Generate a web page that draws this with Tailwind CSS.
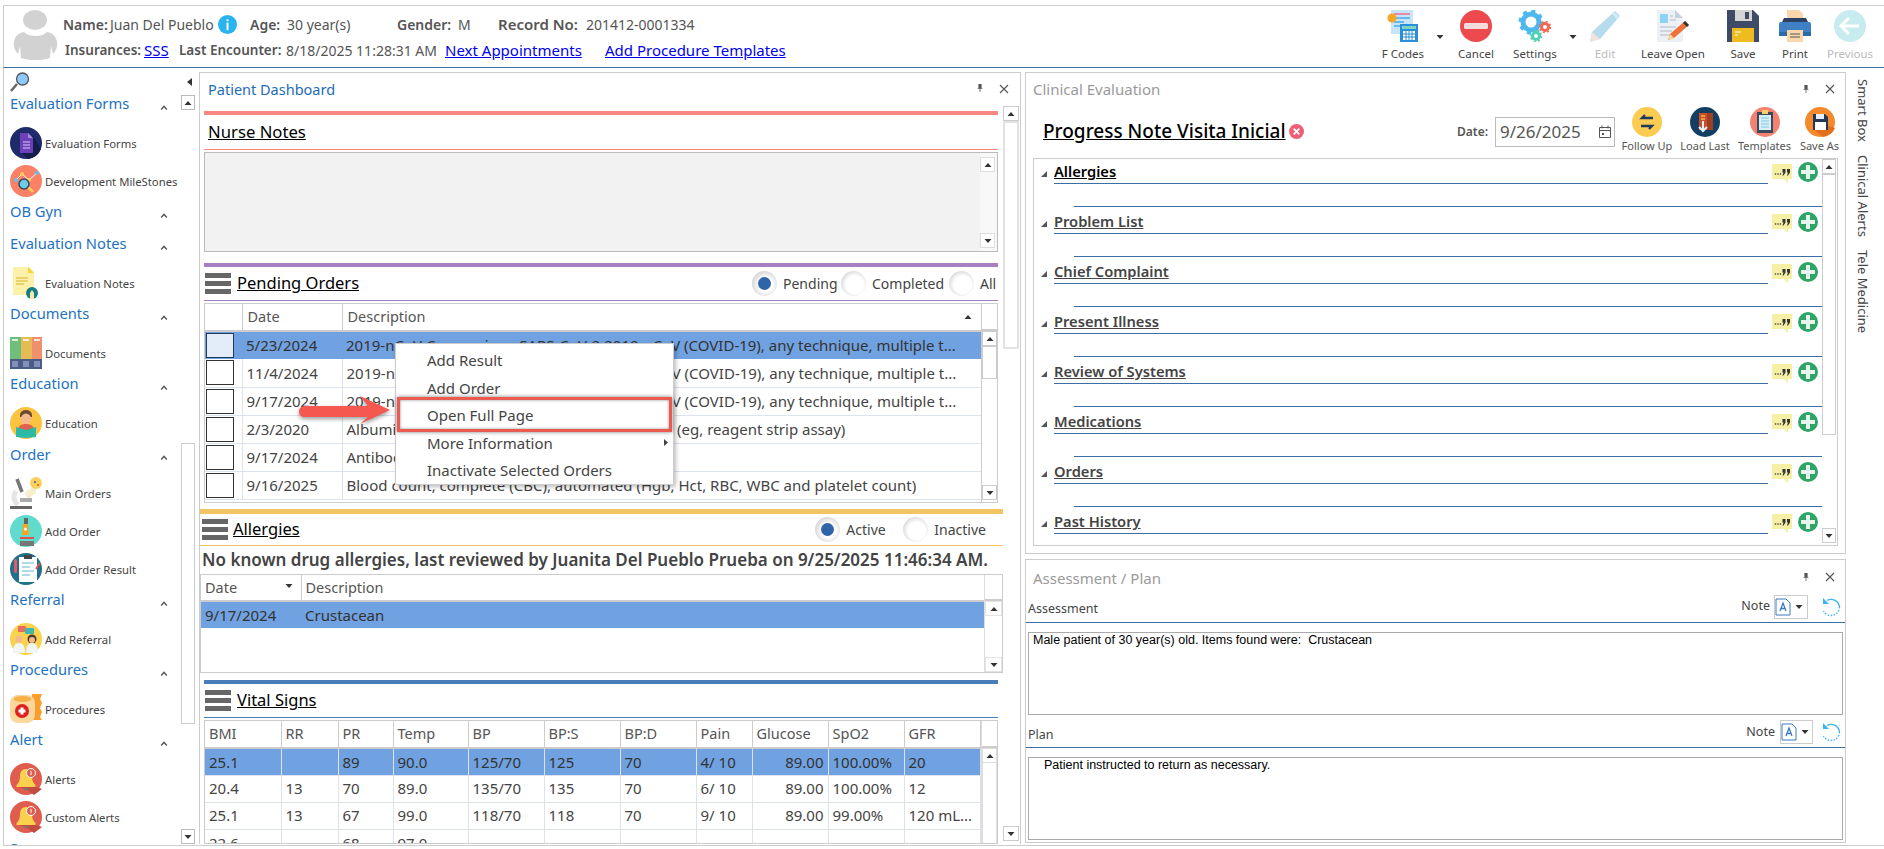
<!DOCTYPE html>
<html lang="en">
<head>
    <meta charset="UTF-8">
    <title>Patient Dashboard</title>
    <script src="https://cdn.jsdelivr.net/npm/@tailwindcss/browser@4"></script>
</head>
<body class="bg-white overflow-hidden font-['Noto_Sans',sans-serif] text-[#444]">
    <!-- Shared icons -->
    <svg class="hidden">
        <symbol id="chev" viewBox="0 0 10 8"><path d="M1.5 6.5 5 2.5l3.5 4" fill="none" stroke="#555" stroke-width="1.8"/></symbol>
        <symbol id="pin" viewBox="0 0 10 12"><path d="M3 1h4v5h1v1H5.5v4h-1V7H2V6h1z" fill="#555"/></symbol>
        <symbol id="close" viewBox="0 0 10 10"><path d="M1 1l8 8M9 1l-8 8" stroke="#555" stroke-width="1.1"/></symbol>
        <symbol id="quote" viewBox="0 0 20 21"><path d="M0 1h20v15h-4v4l-4-4H0z" fill="#f6f0a6"/><circle cx="3.5" cy="11" r=".8" fill="#333"/><circle cx="6" cy="11" r=".8" fill="#333"/><circle cx="8.5" cy="11" r=".8" fill="#333"/><path d="M10.5 6h3v3.5l-2 3h-1l1-3h-1zM15 6h3v3.5l-2 3h-1l1-3h-1z" fill="#333"/></symbol>
        <symbol id="plus" viewBox="0 0 20 20"><circle cx="10" cy="10" r="10" fill="#2fa565"/><path d="M8 3h4v5h5v4h-5v5H8v-5H3V8h5z" fill="#e8f5ee"/></symbol>
        <symbol id="tri" viewBox="0 0 6 6"><path d="M6 0v6H0z" fill="#555"/></symbol>
        <symbol id="bell" viewBox="0 0 32 32"><circle cx="16" cy="16" r="16" fill="#e05c4e"/><path d="M16 26 8 24l16-1 8 3-8 6z" fill="#c24c40"/><path d="M16 6c-4 0-6 3-6 7 0 5-1.500 7-3.500 9v2h19v-2c-2-2-3.500-4-3.500-9 0-4-2-7-6-7z" fill="#fcd04f"/><path d="M13 25h6l-3 3z" fill="#777"/><circle cx="21" cy="10" r="4.500" fill="#e05c4e" stroke="#fff" stroke-width="1"/><path d="M21 7.800v4.400" stroke="#fff" stroke-width="1"/></symbol>
        <symbol id="note" viewBox="0 0 16 18"><path d="M1 1h10l4 4v12H1z" fill="#fff" stroke="#3a78c4"/><path d="M5 13 8 5l3 8M6 10.500h4" fill="none" stroke="#3a78c4" stroke-width="1.300"/></symbol>
        <symbol id="reset" viewBox="0 0 20 20"><path d="M6 3.500A8.500 8.500 0 0 1 18.500 10" fill="none" stroke="#3db4f0" stroke-width="1.400"/><path d="M18.500 10A8.500 8.500 0 0 1 2.500 14" fill="none" stroke="#3db4f0" stroke-width="1.400" stroke-dasharray="1.500 1.500"/><path d="M2 1v6h6z" fill="#3db4f0"/></symbol>
        <symbol id="up" viewBox="0 0 8 6"><path d="M4 1 7.500 5H.5z" fill="#333"/></symbol>
        <symbol id="down" viewBox="0 0 8 6"><path d="M4 5 .5 1h7z" fill="#333"/></symbol>
    </svg>

    <div class="relative w-[1884px] h-[849px] pt-[5px] flex flex-col overflow-hidden">
        <!-- Patient header and toolbar -->
        <header class="ml-[3px] h-[63px] shrink-0 flex border-t border-t-[#ccc] border-l border-l-[#ccc] border-b border-b-[#3a6ea5]">
            <svg class="ml-[9px] mt-[4px] w-[45px] h-[50px] shrink-0" viewBox="0 0 45 50"><ellipse cx="22" cy="10" rx="12" ry="10" fill="#d2d2d2"/><path d="M11 22c-6 1-9 4-10 10-1 4 1 9 4 12l2-8 1 12c9 3 20 3 29 0l1-12 2 8c3-3 5-8 4-12-1-6-4-9-10-10-3 3-7 4-11 4s-9-1-12-4z" fill="#d2d2d2"/></svg>
            <div class="ml-[5px] pt-[5px] text-[14px] text-[#555]">
                <div class="flex items-center h-[26px]">
                    <span class="w-[47px] font-semibold">Name:</span>
                    <span class="w-[108px]">Juan Del Pueblo</span>
                    <span class="w-[32px]"><svg class="w-[19px] h-[19px]" viewBox="0 0 20 20"><circle cx="10" cy="10" r="10" fill="#29b4f0"/><rect x="9" y="8" width="2" height="8" fill="#fff"/><rect x="9" y="4.500" width="2" height="2" fill="#fff"/></svg></span>
                    <span class="w-[37px] font-semibold">Age:</span>
                    <span class="w-[110px]">30 year(s)</span>
                    <span class="w-[61px] font-semibold">Gender:</span>
                    <span class="w-[40px]">M</span>
                    <span class="w-[88px] font-semibold text-[15px]">Record No:</span>
                    <span>201412-0001334</span>
                </div>
                <div class="flex items-center h-[26px] ml-[2px]">
                    <span class="w-[79px] font-semibold text-[13.5px]">Insurances:</span>
                    <a class="w-[35px] text-[15px] text-[#0000ee] underline">SSS</a>
                    <span class="w-[107px] font-semibold text-[13.5px]">Last Encounter:</span>
                    <span class="w-[159px]">8/18/2025 11:28:31 AM</span>
                    <a class="w-[160px] text-[15px] text-[#0000ee] underline">Next Appointments</a>
                    <a class="text-[15px] text-[#0000ee] underline">Add Procedure Templates</a>
                </div>
            </div>
            <div class="ml-auto pr-[3px] pt-[4px] flex text-[11.5px] text-[#444] text-center leading-[24px]">
                <div class="w-[66px]">
                    <svg class="mx-auto w-[32px] h-[32px]" viewBox="0 0 32 32"><rect x="4" y="0" width="22" height="24" fill="#c7e4f8"/><rect x="7" y="3" width="16" height="2" fill="#e889a8"/><rect x="7" y="7" width="16" height="2" fill="#6bb8ec"/><rect x="7" y="11" width="10" height="2" fill="#6bb8ec"/><rect x="7" y="15" width="10" height="2" fill="#6bb8ec"/><rect x="13" y="14" width="18" height="18" fill="#2a8ed8"/><rect x="15" y="16" width="14" height="3" fill="#7fd4c4"/><path d="M16 21h12v9H16z" fill="#fff"/><path d="M16 24h12M16 27h12M19 21v9M22 21v9M25 21v9" stroke="#2a8ed8"/><circle cx="5" cy="8" r="4.500" fill="#f5a623"/></svg>
                    <div>F Codes</div>
                </div>
                <div class="w-[10px] pt-[24px]"><svg class="w-[8px] h-[6px]" viewBox="0 0 8 6"><use href="#down"/></svg></div>
                <div class="w-[60px]">
                    <svg class="mx-auto w-[32px] h-[32px]" viewBox="0 0 32 32"><circle cx="16" cy="16" r="16" fill="#ec4a4f"/><rect x="4" y="13" width="24" height="6" rx="1.500" fill="#f3dcdc"/></svg>
                    <div>Cancel</div>
                </div>
                <div class="w-[58px]">
                    <svg class="mx-auto w-[34px] h-[32px]" viewBox="0 0 34 32"><circle cx="13" cy="12" r="8" fill="none" stroke="#4db8ee" stroke-width="5"/><circle cx="13" cy="12" r="11" fill="none" stroke="#4db8ee" stroke-width="3" stroke-dasharray="4 4.640"/><circle cx="27" cy="17" r="3.500" fill="none" stroke="#ef6a55" stroke-width="3"/><circle cx="27" cy="17" r="5.500" fill="none" stroke="#ef6a55" stroke-width="1.500" stroke-dasharray="2 2.320"/><circle cx="18" cy="26" r="3.500" fill="none" stroke="#4fd1b5" stroke-width="3"/><circle cx="18" cy="26" r="5.500" fill="none" stroke="#4fd1b5" stroke-width="1.500" stroke-dasharray="2 2.320"/></svg>
                    <div>Settings</div>
                </div>
                <div class="w-[10px] ml-[5px] pt-[24px]"><svg class="w-[8px] h-[6px]" viewBox="0 0 8 6"><use href="#down"/></svg></div>
                <div class="w-[52px] text-[#bbb]">
                    <svg class="mx-auto w-[32px] h-[32px]" viewBox="0 0 32 32"><path d="M26 1l5 5L11 29 1 32l2-10z" fill="#b5dcec"/><path d="M3 22l8 7-10 3z" fill="#f3e2dc"/><path d="M25 2l5 5-2 2-5-5z" fill="#d3ebf4"/></svg>
                    <div>Edit</div>
                </div>
                <div class="w-[84px]">
                    <svg class="mx-auto w-[34px] h-[32px]" viewBox="0 0 34 32"><path d="M1 0h18l8 8v24H1z" fill="#edf1f6"/><path d="M19 0l8 8h-8z" fill="#c8d0dc"/><rect x="4" y="4" width="8" height="9" fill="#8dd3f7"/><path d="M4 17h16M4 21h12M4 25h10M14 6h3M14 10h6" stroke="#c5ccd8" stroke-width="1.500"/><path d="M29 11l4 4-15 13-6 2 2-6z" fill="#f0713a"/><path d="M29 11l4 4-2 2-4-4z" fill="#333"/><path d="M14 24l4 4-6 2z" fill="#f5d79a"/></svg>
                    <div>Leave Open</div>
                </div>
                <div class="w-[56px]">
                    <svg class="mx-auto w-[32px] h-[32px]" viewBox="0 0 32 32"><path d="M0 0h26l6 6v26H0z" fill="#3f4a66"/><rect x="8" y="0" width="17" height="11" fill="#d5d5d5"/><rect x="18" y="2" width="4" height="7" fill="#3f4a66"/><rect x="5" y="18" width="22" height="14" fill="#eebc1f"/><path d="M8 22h6M8 25h3" stroke="#fff" stroke-width="1.200"/></svg>
                    <div>Save</div>
                </div>
                <div class="w-[48px]">
                    <svg class="mx-auto w-[32px] h-[32px]" viewBox="0 0 32 32"><path d="M8 0h12l4 4v10H8z" fill="#fad7a8"/><path d="M5 8h22l2 4H3z" fill="#2d4263"/><rect x="0" y="12" width="32" height="14" rx="2" fill="#3f7fc4"/><rect x="0" y="22" width="32" height="4" fill="#2d6aa8"/><rect x="8" y="20" width="16" height="12" fill="#fad7a8"/><path d="M11 24h10M11 27h10" stroke="#555"/></svg>
                    <div>Print</div>
                </div>
                <div class="w-[62px] text-[#bbb]">
                    <svg class="mx-auto w-[32px] h-[32px]" viewBox="0 0 32 32"><circle cx="16" cy="16" r="16" fill="#c7ebee"/><path d="M15 8l-8 8 8 8M7 16h18" fill="none" stroke="#fff" stroke-width="3"/></svg>
                    <div>Previous</div>
                </div>
            </div>
        </header>

        <main class="ml-[3px] h-[778px] flex border-b border-b-[#ccc]">
            <!-- Left navigation -->
            <aside class="relative w-[196px] h-[777px] shrink-0 flex border-l border-l-[#ccc] overflow-hidden">
                <div class="w-[177px] pt-[4px] text-[12px] text-[#444]">
                    <svg class="ml-[6px] w-[20px] h-[20px]" viewBox="0 0 20 20"><path d="M7 12 1 19" stroke="#666" stroke-width="2.500"/><circle cx="12.500" cy="7" r="6" fill="#8fc8fa" stroke="#555" stroke-width="1.300"/></svg>

                    <div class="-mt-px flex items-center h-[26px] pl-[6px]"><span class="w-[150px] text-[14.7px] text-[#2272c3] -translate-y-px">Evaluation Forms</span><svg class="w-[8px] h-[7px] mt-[6px]"><use href="#chev"/></svg></div>
                    <div class="mt-[7px] mb-[-1px]">
                        <div class="flex items-center h-[38px] pl-[6px]">
                            <svg class="w-[32px] h-[32px] mr-[3px]" viewBox="0 0 32 32"><circle cx="16" cy="16" r="16" fill="#1f2a6b"/><path d="M23 9 31 22A16 16 0 0 1 18 32L10 24z" fill="#141c4c"/><path d="M10 6h8l5 5v15H10z" fill="#6d3fb8"/><path d="M18 6l5 5h-5z" fill="#a58ad8"/><path d="M13 15h7M13 18h7M13 21h7" stroke="#d9ccf2" stroke-width="1"/></svg>
                            <span class="text-[11.3px] translate-y-px">Evaluation Forms</span>
                        </div>
                        <div class="flex items-center h-[38px] pl-[6px]">
                            <svg class="w-[32px] h-[32px] mr-[3px]" viewBox="0 0 32 32"><circle cx="16" cy="16" r="16" fill="#fa8168"/><path d="M6 15 12 9l7 6 8-7" fill="none" stroke="#fff" stroke-width="1"/><circle cx="6" cy="15" r="2" fill="#5ec4e8"/><circle cx="12" cy="9" r="2" fill="#fcd04f"/><circle cx="19" cy="15" r="2" fill="#fcd04f"/><circle cx="27" cy="8" r="2" fill="#5ec4e8"/><path d="M18 22l5 5" stroke="#fcd04f" stroke-width="2.500"/><circle cx="14" cy="19" r="5" fill="#6ccbe8" stroke="#34495e" stroke-width="1.500"/></svg>
                            <span class="text-[11.3px] translate-y-px">Development MileStones</span>
                        </div>
                    </div>

                    <div class="flex items-center h-[26px] pl-[6px] mb-[6px]"><span class="w-[150px] text-[14.7px] text-[#2272c3] -translate-y-px">OB Gyn</span><svg class="w-[8px] h-[7px] mt-[6px]"><use href="#chev"/></svg></div>

                    <div class="flex items-center h-[26px] pl-[6px]"><span class="w-[150px] text-[14.7px] text-[#2272c3] -translate-y-px">Evaluation Notes</span><svg class="w-[8px] h-[7px] mt-[6px]"><use href="#chev"/></svg></div>
                    <div class="mt-[7px] mb-[-1px]">
                        <div class="flex items-center h-[38px] pl-[6px]">
                            <svg class="w-[32px] h-[32px] mr-[3px]" viewBox="0 0 32 32"><path d="M3 0h16l5 5v23H3z" fill="#fdf0a8"/><path d="M18 0l6 6h-6z" fill="#f5d33a"/><path d="M6 11h12M6 14h12M6 17h8" stroke="#d9b43a" stroke-width="1.200"/><circle cx="22" cy="26" r="6" fill="#177e84"/><path d="M20 32v-6l2-3 2 3v6z" fill="#f8e9b0"/></svg>
                            <span class="text-[11.3px] translate-y-px">Evaluation Notes</span>
                        </div>
                    </div>

                    <div class="flex items-center h-[26px] pl-[6px]"><span class="w-[150px] text-[14.7px] text-[#2272c3] -translate-y-px">Documents</span><svg class="w-[8px] h-[7px] mt-[6px]"><use href="#chev"/></svg></div>
                    <div class="mt-[7px] mb-[-1px]">
                        <div class="flex items-center h-[38px] pl-[6px]">
                            <svg class="w-[32px] h-[32px] mr-[3px]" viewBox="0 0 32 32"><rect width="11" height="32" fill="#6fbf7a"/><rect x="11" width="11" height="32" fill="#e4bb55"/><rect x="22" width="10" height="32" fill="#ee8f6e"/><rect y="22" width="32" height="10" fill="#4a5b85"/><path d="M2 3h6M13 3h6M24 3h6" stroke="#fff" stroke-width="1.500"/><rect x="2" y="24" width="6" height="6" fill="#8090b8"/><rect x="13" y="24" width="6" height="6" fill="#8090b8"/><rect x="24" y="24" width="6" height="6" fill="#8090b8"/></svg>
                            <span class="text-[11.3px] translate-y-px">Documents</span>
                        </div>
                    </div>

                    <div class="flex items-center h-[26px] pl-[6px]"><span class="w-[150px] text-[14.7px] text-[#2272c3] -translate-y-px">Education</span><svg class="w-[8px] h-[7px] mt-[6px]"><use href="#chev"/></svg></div>
                    <div class="mt-[7px] mb-[-1px]">
                        <div class="flex items-center h-[38px] pl-[6px]">
                            <svg class="w-[32px] h-[32px] mr-[3px]" viewBox="0 0 32 32"><circle cx="16" cy="16" r="16" fill="#fbc340"/><path d="M10 8a6 5 0 0 1 12 0v2H10z" fill="#6b4a32"/><ellipse cx="16" cy="12" rx="5" ry="5.500" fill="#f5b98e"/><path d="M8 24c0-5 3-7 8-7s8 2 8 7z" fill="#e2604e"/><path d="M6 20l10 3 10-3v10l-10 1-10-1z" fill="#2cb9a5"/></svg>
                            <span class="text-[11.3px] translate-y-px">Education</span>
                        </div>
                    </div>

                    <div class="flex items-center h-[26px] pl-[6px]"><span class="w-[150px] text-[14.7px] text-[#2272c3]">Order</span><svg class="w-[8px] h-[7px] mt-[6px]"><use href="#chev"/></svg></div>
                    <div class="mt-[7px] mb-[-1px]">
                        <div class="flex items-center h-[38px] pl-[6px]">
                            <svg class="w-[32px] h-[32px] mr-[3px]" viewBox="0 0 32 32"><path d="M7 2l5 13" stroke="#777" stroke-width="3.500"/><path d="M6 14a10 10 0 0 0 2 14" fill="none" stroke="#e6e6e6" stroke-width="5"/><path d="M14 16 26 8v8l-8 6z" fill="#f4efd0"/><rect x="10" y="21" width="12" height="4" fill="#aaa"/><rect y="29" width="22" height="3" fill="#666"/><circle cx="26" cy="6" r="6" fill="#fbd05c"/><circle cx="25" cy="5" r="1" fill="#2c5d9e"/><circle cx="28" cy="8" r="1" fill="#d9503f"/></svg>
                            <span class="text-[11.3px] translate-y-px">Main Orders</span>
                        </div>
                        <div class="flex items-center h-[38px] pl-[6px]">
                            <svg class="w-[32px] h-[32px] mr-[3px]" viewBox="0 0 32 32"><circle cx="16" cy="16" r="16" fill="#5fdccd"/><rect x="14" y="3" width="4" height="6" fill="#666"/><path d="M13 9h5l1 11h-7z" fill="#f4a623"/><circle cx="15.500" cy="14" r="1.500" fill="#fff"/><rect x="10" y="22" width="14" height="2" fill="#e2504e"/><rect x="10" y="26" width="14" height="5" fill="#777"/></svg>
                            <span class="text-[11.3px] translate-y-px">Add Order</span>
                        </div>
                        <div class="flex items-center h-[38px] pl-[6px]">
                            <svg class="w-[32px] h-[32px] mr-[3px]" viewBox="0 0 32 32"><circle cx="16" cy="16" r="16" fill="#1f7088"/><rect x="9" y="4" width="18" height="25" fill="#fff"/><rect x="14" y="2" width="8" height="4" fill="#444"/><path d="M12 10h12M12 14h8M12 18h12M12 22h8" stroke="#5fb8c8"/><rect x="4" y="6" width="3" height="14" rx="1.500" fill="#e25b6a"/><path d="M26 16l4-6" stroke="#e2504e" stroke-width="2"/></svg>
                            <span class="text-[11.3px] translate-y-px">Add Order Result</span>
                        </div>
                    </div>

                    <div class="flex items-center h-[26px] pl-[6px]"><span class="w-[150px] text-[14.7px] text-[#2272c3] -translate-y-px">Referral</span><svg class="w-[8px] h-[7px] mt-[6px]"><use href="#chev"/></svg></div>
                    <div class="mt-[7px] mb-[-1px]">
                        <div class="flex items-center h-[38px] pl-[6px]">
                            <svg class="w-[32px] h-[32px] mr-[3px]" viewBox="0 0 32 32"><circle cx="16" cy="16" r="16" fill="#fbd24d"/><rect x="8" y="3" width="8" height="6" rx="1" fill="#ec6a5e"/><rect x="15" y="5" width="9" height="6" rx="1" fill="#3fb8b0"/><circle cx="9" cy="16" r="3.500" fill="#f5b98e"/><path d="M3 30c0-7 2-10 6-10s6 3 6 10z" fill="#eef6f6"/><circle cx="22" cy="16" r="4.500" fill="#4a3a30"/><circle cx="22" cy="17" r="3" fill="#f5b98e"/><path d="M16 30c0-7 2-10 6-10s6 3 6 10z" fill="#eef6f6"/></svg>
                            <span class="text-[11.3px] translate-y-px">Add Referral</span>
                        </div>
                    </div>

                    <div class="flex items-center h-[26px] pl-[6px]"><span class="w-[150px] text-[14.7px] text-[#2272c3] -translate-y-px">Procedures</span><svg class="w-[8px] h-[7px] mt-[6px]"><use href="#chev"/></svg></div>
                    <div class="mt-[7px] mb-[-1px]">
                        <div class="flex items-center h-[38px] pl-[6px]">
                            <svg class="w-[32px] h-[32px] mr-[3px]" viewBox="0 0 32 32"><path d="M22 1h10l-2 5 2 4-2 5 2 4-2 5 2 3H22z" fill="#fb9d2c"/><rect x="0" y="2" width="25" height="28" rx="8" fill="#fbd79c"/><ellipse cx="12.500" cy="6" rx="9" ry="3" fill="#f5b04a"/><circle cx="12" cy="18" r="7" fill="#e01f1f"/><path d="M10.500 14.500h3v2h2v3h-2v2h-3v-2h-2v-3h2z" fill="#fff"/></svg>
                            <span class="text-[11.3px] translate-y-px">Procedures</span>
                        </div>
                    </div>

                    <div class="flex items-center h-[26px] pl-[6px]"><span class="w-[150px] text-[14.7px] text-[#2272c3] -translate-y-px">Alert</span><svg class="w-[8px] h-[7px] mt-[6px]"><use href="#chev"/></svg></div>
                    <div class="mt-[7px] mb-[-1px]">
                        <div class="flex items-center h-[38px] pl-[6px]">
                            <svg class="w-[32px] h-[32px] mr-[3px]"><use href="#bell"/></svg>
                            <span class="text-[11.3px] translate-y-px">Alerts</span>
                        </div>
                        <div class="flex items-center h-[38px] pl-[6px]">
                            <svg class="w-[32px] h-[32px] mr-[3px]"><use href="#bell"/></svg>
                            <span class="text-[11.3px] translate-y-px">Custom Alerts</span>
                        </div>
                    </div>
                    <div class="flex items-center h-[26px] pl-[6px]"><span class="w-[150px] text-[14.7px] text-[#2272c3]">Surgery</span></div>
                </div>
                <!-- Navigation scrollbar -->
                <div class="w-[14px] pt-[27px] flex flex-col items-stretch">
                    <div class="h-[15px] border border-[#bbb] flex items-center justify-center"><svg class="w-[8px] h-[6px]"><use href="#up"/></svg></div>
                    <div class="mt-[333px] h-[281px] border border-[#ccc]"></div>
                    <div class="mt-[105px] h-[15px] border border-[#bbb] flex items-center justify-center"><svg class="w-[8px] h-[6px]"><use href="#down"/></svg></div>
                </div>
                <svg class="absolute left-[183px] top-[10px] w-[5px] h-[8px]" viewBox="0 0 5 8"><path d="M5 0v8L0 4z" fill="#333"/></svg>
            </aside>

            <!-- Patient dashboard -->
            <section class="mt-[4px] w-[822px] h-[772px] shrink-0 flex border border-[#ccc] border-b-0 overflow-hidden">
                <div class="w-[803px] shrink-0">
                    <div class="h-[38px] pl-[8px] pb-[4px] flex items-center">
                        <span class="text-[14.5px] text-[#1c6cb8]">Patient Dashboard</span>
                    </div>
                    <div class="ml-[4px] w-[794px]">
                        <div class="h-[4px] bg-[#f98683]"></div>
                        <div class="h-[35px] pl-[4px] flex items-center border-b border-b-[#f98683]"><span class="text-[16.7px] text-black underline">Nurse Notes</span></div>
                        <div class="mt-[2px] h-[100px] flex border border-[#bbb] bg-[#f2f2f2]">
                            <div class="flex-1"></div>
                            <div class="w-[17px] bg-[#f8f8f8] pr-[2px] pt-[4px] pb-[3px] flex flex-col justify-between items-center">
                                <div class="w-[15px] h-[15px] bg-white border border-[#ddd] flex items-center justify-center"><svg class="w-[8px] h-[6px]"><use href="#up"/></svg></div>
                                <div class="w-[15px] h-[15px] bg-white border border-[#ddd] flex items-center justify-center"><svg class="w-[8px] h-[6px]"><use href="#down"/></svg></div>
                            </div>
                        </div>
                        <div class="mt-[11px] h-[4px] bg-[#a680c0]"></div>
                        <div class="h-[34px] flex items-center border-b border-b-[#a680c0]">
                            <div class="ml-px w-[26px] flex flex-col gap-[3px]"><i class="h-[5px] bg-[#666]"></i><i class="h-[5px] bg-[#666]"></i><i class="h-[5px] bg-[#666]"></i></div>
                            <span class="ml-[6px] text-[16.5px] text-black underline">Pending Orders</span>
                            <div class="ml-auto flex items-center text-[14px] text-[#444]">
                                <span class="w-[25px] h-[25px] rounded-full bg-[radial-gradient(circle_at_55%_55%,#fff_35%,#b8b8b8_100%)] flex items-center justify-center"><i class="w-[13px] h-[13px] rounded-full bg-[#2f65a8]"></i></span>
                                <span class="w-[64px] pl-[6px]">Pending</span>
                                <span class="w-[25px] h-[25px] rounded-full bg-[radial-gradient(circle_at_55%_55%,#fff_45%,#b8b8b8_100%)]"></span>
                                <span class="w-[83px] pl-[6px]">Completed</span>
                                <span class="w-[25px] h-[25px] rounded-full bg-[radial-gradient(circle_at_55%_55%,#fff_45%,#b8b8b8_100%)]"></span>
                                <span class="w-[24px] pl-[6px]">All</span>
                            </div>
                        </div>
                        <div class="mt-[2px] h-[200px] flex border border-[#ccc] overflow-hidden text-[15px]">
                            <table class="w-[776px] h-fit table-fixed shrink-0 border-collapse">
                                <colgroup><col class="w-[37px]"><col class="w-[100px]"><col></colgroup>
                                <thead>
                                    <tr class="h-[27px] border-b-2 border-b-[#ccc] text-[#555] text-[14.5px]">
                                        <th class="border-r border-r-[#ccc]"></th>
                                        <th class="pl-[5px] font-normal text-left border-r border-r-[#ccc]">Date</th>
                                        <th class="pl-[5px] font-normal text-left"><div class="flex items-center justify-between pr-[9px]">Description<svg class="w-[8px] h-[6px]"><use href="#up"/></svg></div></th>
                                    </tr>
                                </thead>
                                <tbody>
                                    <tr class="h-[28px] bg-[#70a1e0] text-[#333]">
                                        <td class="pl-px"><div class="w-[28px] h-[25px] border border-[#1d3a60] bg-[#e3ecf8]"></div></td>
                                        <td class="pl-[4px]">5/23/2024</td>
                                        <td class="pl-[4px] truncate">2019-nCoV Coronavirus, SARS-CoV-2 2019-nCoV (COVID-19), any technique, multiple t...</td>
                                    </tr>
                                    <tr class="h-[28px] border-b border-b-[#dde3ec]">
                                        <td class="pl-px"><div class="w-[28px] h-[25px] border border-[#333]"></div></td>
                                        <td class="pl-[4px] border-l border-l-[#dde3ec]">11/4/2024</td>
                                        <td class="pl-[4px] truncate border-l border-l-[#dde3ec]">2019-nCoV Coronavirus, SARS-CoV-2 2019-nCoV (COVID-19), any technique, multiple t...</td>
                                    </tr>
                                    <tr class="h-[28px] border-b border-b-[#dde3ec]">
                                        <td class="pl-px"><div class="w-[28px] h-[25px] border border-[#333]"></div></td>
                                        <td class="pl-[4px] border-l border-l-[#dde3ec]">9/17/2024</td>
                                        <td class="pl-[4px] truncate border-l border-l-[#dde3ec]">2019-nCoV Coronavirus, SARS-CoV-2 2019-nCoV (COVID-19), any technique, multiple t...</td>
                                    </tr>
                                    <tr class="h-[28px] border-b border-b-[#dde3ec]">
                                        <td class="pl-px"><div class="w-[28px] h-[25px] border border-[#333]"></div></td>
                                        <td class="pl-[4px] border-l border-l-[#dde3ec]">2/3/2020</td>
                                        <td class="pl-[4px] truncate border-l border-l-[#dde3ec]">Albumin; urine (eg, albumin), semiquantitative (eg, reagent strip assay)</td>
                                    </tr>
                                    <tr class="h-[28px] border-b border-b-[#dde3ec]">
                                        <td class="pl-px"><div class="w-[28px] h-[25px] border border-[#333]"></div></td>
                                        <td class="pl-[4px] border-l border-l-[#dde3ec]">9/17/2024</td>
                                        <td class="pl-[4px] truncate border-l border-l-[#dde3ec]">Antibody screen</td>
                                    </tr>
                                    <tr class="h-[28px] border-b border-b-[#dde3ec]">
                                        <td class="pl-px"><div class="w-[28px] h-[25px] border border-[#333]"></div></td>
                                        <td class="pl-[4px] border-l border-l-[#dde3ec]">9/16/2025</td>
                                        <td class="pl-[4px] truncate border-l border-l-[#dde3ec]">Blood count, complete (CBC), automated (Hgb, Hct, RBC, WBC and platelet count)</td>
                                    </tr>
                                </tbody>
                            </table>
                            <div class="flex-1 flex flex-col border-l border-l-[#ccc]">
                                <div class="h-[27px] border-b-2 border-b-[#ccc]"></div>
                                <div class="h-[15px] border border-[#ccc] flex items-center justify-center"><svg class="w-[8px] h-[6px]"><use href="#up"/></svg></div>
                                <div class="h-[33px] border border-[#ccc]"></div>
                                <div class="mt-auto h-[15px] border border-[#ccc] flex items-center justify-center mb-[2px]"><svg class="w-[8px] h-[6px]"><use href="#down"/></svg></div>
                            </div>
                        </div>
                    </div>

                    <div class="mt-[6px] w-[803px]">
                        <div class="h-[5px] bg-[#f2c464]"></div>
                        <div class="h-[32px] flex items-center border-b border-b-[#f2c464] pl-[2px]">
                            <div class="w-[26px] flex flex-col gap-[3px]"><i class="h-[5px] bg-[#666]"></i><i class="h-[5px] bg-[#666]"></i><i class="h-[5px] bg-[#666]"></i></div>
                            <span class="ml-[5px] text-[16.5px] text-black underline">Allergies</span>
                            <div class="ml-auto mr-[17px] flex items-center text-[14px] text-[#444]">
                                <span class="w-[25px] h-[25px] rounded-full bg-[radial-gradient(circle_at_55%_55%,#fff_35%,#b8b8b8_100%)] flex items-center justify-center"><i class="w-[13px] h-[13px] rounded-full bg-[#2f65a8]"></i></span>
                                <span class="w-[63px] pl-[6px]">Active</span>
                                <span class="w-[25px] h-[25px] rounded-full bg-[radial-gradient(circle_at_55%_55%,#fff_45%,#b8b8b8_100%)]"></span>
                                <span class="pl-[6px]">Inactive</span>
                            </div>
                        </div>
                        <div class="h-[28px] pl-[2px] flex items-center text-[17px] font-semibold text-[#444] whitespace-nowrap">No known drug allergies, last reviewed by Juanita Del Pueblo Prueba on 9/25/2025 11:46:34 AM.</div>
                        <div class="h-[99px] flex border border-[#ccc] overflow-hidden text-[15px]">
                            <table class="w-[783px] h-fit table-fixed shrink-0 border-collapse">
                                <colgroup><col class="w-[100px]"><col></colgroup>
                                <thead>
                                    <tr class="h-[26px] border-b-2 border-b-[#ccc] text-[#555] text-[14.5px]">
                                        <th class="pl-[4px] font-normal text-left border-r border-r-[#ccc]"><div class="flex items-center justify-between pr-[8px]">Date<svg class="w-[8px] h-[6px] mb-[3px]"><use href="#down"/></svg></div></th>
                                        <th class="pl-[4px] font-normal text-left">Description</th>
                                    </tr>
                                </thead>
                                <tbody>
                                    <tr class="h-[27px] bg-[#70a1e0] text-[#333]"><td class="pl-[4px]">9/17/2024</td><td class="pl-[4px]">Crustacean</td></tr>
                                </tbody>
                            </table>
                            <div class="flex-1 flex flex-col border-l border-l-[#ddd]">
                                <div class="h-[26px] border-b-2 border-b-[#ccc]"></div>
                                <div class="h-[15px] border border-[#e4e4e4] flex items-center justify-center"><svg class="w-[8px] h-[6px]"><use href="#up"/></svg></div>
                                <div class="mt-auto h-[15px] border border-[#e4e4e4] flex items-center justify-center"><svg class="w-[8px] h-[6px]"><use href="#down"/></svg></div>
                            </div>
                        </div>
                    </div>

                    <div class="ml-[4px] w-[794px] mt-[7px]">
                        <div class="h-[4px] bg-[#4a7ebb]"></div>
                        <div class="h-[34px] flex items-center border-b border-b-[#4a7ebb]">
                            <div class="ml-px w-[26px] flex flex-col gap-[3px]"><i class="h-[5px] bg-[#666]"></i><i class="h-[5px] bg-[#666]"></i><i class="h-[5px] bg-[#666]"></i></div>
                            <span class="ml-[6px] text-[16.5px] text-black underline">Vital Signs</span>
                        </div>
                        <div class="mt-[2px] h-[124px] flex border border-[#ccc] overflow-hidden text-[15px]">
                            <table class="w-[776px] h-fit table-fixed shrink-0 border-collapse">
                                <colgroup><col class="w-[76px]"><col class="w-[57px]"><col class="w-[55px]"><col class="w-[75px]"><col class="w-[76px]"><col class="w-[76px]"><col class="w-[76px]"><col class="w-[56px]"><col class="w-[76px]"><col class="w-[76px]"><col></colgroup>
                                <thead>
                                    <tr class="h-[27px] border-b-2 border-b-[#ccc] text-[#555] text-[14.5px] text-left [&>th]:font-normal [&>th]:pl-[4px] [&>th]:border-r [&>th]:border-r-[#ccc]">
                                        <th>BMI</th><th>RR</th><th>PR</th><th>Temp</th><th>BP</th><th>BP:S</th><th>BP:D</th><th>Pain</th><th>Glucose</th><th>SpO2</th><th>GFR</th>
                                    </tr>
                                </thead>
                                <tbody class="[&_td]:pl-[4px] [&_td]:border-r [&_td]:border-r-[#dde3ec] [&_td]:whitespace-nowrap">
                                    <tr class="h-[27px] bg-[#70a1e0] text-[#333] border-b border-b-[#dde3ec]"><td>25.1</td><td></td><td>89</td><td>90.0</td><td>125/70</td><td>125</td><td>70</td><td>4/ 10</td><td class="text-right pr-[4px]">89.00</td><td>100.00%</td><td>20</td></tr>
                                    <tr class="h-[27px] border-b border-b-[#dde3ec]"><td>20.4</td><td>13</td><td>70</td><td>89.0</td><td>135/70</td><td>135</td><td>70</td><td>6/ 10</td><td class="text-right pr-[4px]">89.00</td><td>100.00%</td><td>12</td></tr>
                                    <tr class="h-[27px] border-b border-b-[#dde3ec]"><td>25.1</td><td>13</td><td>67</td><td>99.0</td><td>118/70</td><td>118</td><td>70</td><td>9/ 10</td><td class="text-right pr-[4px]">89.00</td><td>99.00%</td><td>120 mL...</td></tr>
                                    <tr class="h-[27px]"><td>22.6</td><td></td><td>68</td><td>97.0</td><td></td><td></td><td></td><td></td><td></td><td></td><td></td></tr>
                                </tbody>
                            </table>
                            <div class="flex-1 flex flex-col border-l border-l-[#ddd]">
                                <div class="h-[27px] border-b-2 border-b-[#ccc]"></div>
                                <div class="h-[15px] border border-[#ddd] flex items-center justify-center"><svg class="w-[8px] h-[6px]"><use href="#up"/></svg></div>
                                <div class="flex-1 border-x border-[#ddd]"></div>
                            </div>
                        </div>
                    </div>
                </div>
                <!-- Dashboard outer scrollbar -->
                <div class="flex-1 relative">
                    <svg class="absolute left-[-27px] top-[10px] w-[8px] h-[10px]"><use href="#pin"/></svg>
                    <svg class="absolute left-[-4px] top-[11px] w-[10px] h-[10px]"><use href="#close"/></svg>
                    <div class="mt-[33px] mr-px h-[15px] border border-[#ccc] flex items-center justify-center"><svg class="w-[8px] h-[6px]"><use href="#up"/></svg></div>
                    <div class="mr-px h-[228px] border-2 border-[#e2e2e2]"></div>
                    <div class="mt-[477px] mr-px h-[15px] border border-[#ccc] flex items-center justify-center"><svg class="w-[8px] h-[6px]"><use href="#down"/></svg></div>
                </div>
            </section>

            <!-- Right column -->
            <div class="ml-[4px] mt-[4px] w-[821px] shrink-0">
                <section class="h-[482px] border border-[#ccc]">
                    <div class="h-[32px] pl-[7px] pr-[10px] flex items-center justify-between">
                        <span class="text-[15px] text-[#9a9a9a]">Clinical Evaluation</span>
                        <span class="flex items-center gap-[15px]"><svg class="w-[8px] h-[10px]"><use href="#pin"/></svg><svg class="w-[10px] h-[10px]"><use href="#close"/></svg></span>
                    </div>
                    <div class="h-[53px] flex items-center pl-[17px]">
                        <span class="text-[19px] font-medium text-black underline">Progress Note Visita Inicial</span>
                        <svg class="ml-[3px] w-[15px] h-[15px]" viewBox="0 0 16 16"><circle cx="8" cy="8" r="8" fill="#ee5f76"/><path d="M5 5l6 6M11 5l-6 6" stroke="#fff" stroke-width="2"/></svg>
                        <span class="ml-auto text-[12px] font-semibold text-[#555]">Date:</span>
                        <div class="ml-[7px] w-[120px] h-[30px] border border-[#bbb] flex items-center justify-between pl-[4px] pr-[3px] text-[17px] text-[#555]">9/26/2025
                            <svg class="w-[12px] h-[13px]" viewBox="0 0 12 13"><path d="M.5 2.500h11v10H.5zM.5 5.500h11M3 .5v3M9 .5v3" fill="none" stroke="#555"/><rect x="3" y="8" width="2" height="2" fill="#555"/></svg>
                        </div>
                        <div class="ml-[4px] flex text-[11px] text-[#555] text-center self-start pt-[2px] leading-[18px]">
                            <div class="w-[56px]">
                                <svg class="mx-auto w-[30px] h-[30px]" viewBox="0 0 30 30"><circle cx="15" cy="15" r="15" fill="#fbcb52"/><path d="M21 11H10l3-3M9 19h11l-3 3" fill="none" stroke="#1f3a5f" stroke-width="2.300"/></svg>
                                <div>Follow Up</div>
                            </div>
                            <div class="w-[60px]">
                                <svg class="mx-auto w-[30px] h-[30px]" viewBox="0 0 30 30"><circle cx="15" cy="15" r="15" fill="#143f63"/><rect x="9" y="6" width="14" height="17" fill="#c8512c"/><rect x="17" y="6" width="6" height="17" fill="#a13f22"/><path d="M11 9h4M11 12h4" stroke="#f5b04a" stroke-width="1.500"/><path d="M13 14v9M9 20l4 4 4-4" fill="none" stroke="#e8f2f8" stroke-width="2"/></svg>
                                <div>Load Last</div>
                            </div>
                            <div class="w-[59px]">
                                <svg class="mx-auto w-[30px] h-[30px]" viewBox="0 0 30 30"><circle cx="15" cy="15" r="15" fill="#f58170"/><rect x="7" y="5" width="16" height="21" fill="#3a4a5e"/><rect x="9" y="8" width="12" height="15" fill="#d9f0fa"/><rect x="12" y="3" width="6" height="4" fill="#f5d16b"/><path d="M11 11h8M11 14h8M11 17h8M11 20h8" stroke="#7cc5e8"/></svg>
                                <div>Templates</div>
                            </div>
                            <div class="w-[51px]">
                                <svg class="mx-auto w-[30px] h-[30px]" viewBox="0 0 30 30"><circle cx="15" cy="15" r="15" fill="#f58a2c"/><path d="M15 16l15 5a15 15 0 0 1-12 9L8 22z" fill="#e2701c"/><path d="M8 7h12l3 3v13H8z" fill="#24375a"/><rect x="11" y="7" width="8" height="5" fill="#e8eef5"/><rect x="10" y="15" width="11" height="8" fill="#fff"/></svg>
                                <div>Save As</div>
                            </div>
                        </div>
                    </div>
                    <div class="ml-[7px] w-[805px] h-[388px] flex border border-[#ccc] overflow-hidden">
                        <div class="w-[788px] shrink-0">
                            <div class="h-[50px]">
                                <div class="flex items-start">
                                    <svg class="ml-[7px] mt-[12px] w-[6px] h-[6px]"><use href="#tri"/></svg>
                                    <div class="ml-[7px] w-[714px] h-[25px] border-b border-b-[#3a6ea5] text-[14.7px] font-semibold text-black leading-[24px]"><span class="underline">Allergies</span></div>
                                    <svg class="ml-[4px] mt-[4px] w-[20px] h-[21px]"><use href="#quote"/></svg>
                                    <svg class="ml-[6px] mt-[3px] w-[20px] h-[20px]"><use href="#plus"/></svg>
                                </div>
                                <div class="ml-[40px] mt-[22px] w-[748px] h-px bg-[#3a6ea5]"></div>
                            </div>
                            <div class="h-[50px]">
                                <div class="flex items-start">
                                    <svg class="ml-[7px] mt-[12px] w-[6px] h-[6px]"><use href="#tri"/></svg>
                                    <div class="ml-[7px] w-[714px] h-[25px] border-b border-b-[#3a6ea5] text-[14.7px] font-semibold text-[#444] leading-[24px]"><span class="underline">Problem List</span></div>
                                    <svg class="ml-[4px] mt-[4px] w-[20px] h-[21px]"><use href="#quote"/></svg>
                                    <svg class="ml-[6px] mt-[3px] w-[20px] h-[20px]"><use href="#plus"/></svg>
                                </div>
                                <div class="ml-[40px] mt-[22px] w-[748px] h-px bg-[#3a6ea5]"></div>
                            </div>
                            <div class="h-[50px]">
                                <div class="flex items-start">
                                    <svg class="ml-[7px] mt-[12px] w-[6px] h-[6px]"><use href="#tri"/></svg>
                                    <div class="ml-[7px] w-[714px] h-[25px] border-b border-b-[#3a6ea5] text-[14.7px] font-semibold text-[#444] leading-[24px]"><span class="underline">Chief Complaint</span></div>
                                    <svg class="ml-[4px] mt-[4px] w-[20px] h-[21px]"><use href="#quote"/></svg>
                                    <svg class="ml-[6px] mt-[3px] w-[20px] h-[20px]"><use href="#plus"/></svg>
                                </div>
                                <div class="ml-[40px] mt-[22px] w-[748px] h-px bg-[#3a6ea5]"></div>
                            </div>
                            <div class="h-[50px]">
                                <div class="flex items-start">
                                    <svg class="ml-[7px] mt-[12px] w-[6px] h-[6px]"><use href="#tri"/></svg>
                                    <div class="ml-[7px] w-[714px] h-[25px] border-b border-b-[#3a6ea5] text-[14.7px] font-semibold text-[#444] leading-[24px]"><span class="underline">Present Illness</span></div>
                                    <svg class="ml-[4px] mt-[4px] w-[20px] h-[21px]"><use href="#quote"/></svg>
                                    <svg class="ml-[6px] mt-[3px] w-[20px] h-[20px]"><use href="#plus"/></svg>
                                </div>
                                <div class="ml-[40px] mt-[22px] w-[748px] h-px bg-[#3a6ea5]"></div>
                            </div>
                            <div class="h-[50px]">
                                <div class="flex items-start">
                                    <svg class="ml-[7px] mt-[12px] w-[6px] h-[6px]"><use href="#tri"/></svg>
                                    <div class="ml-[7px] w-[714px] h-[25px] border-b border-b-[#3a6ea5] text-[14.7px] font-semibold text-[#444] leading-[24px]"><span class="underline">Review of Systems</span></div>
                                    <svg class="ml-[4px] mt-[4px] w-[20px] h-[21px]"><use href="#quote"/></svg>
                                    <svg class="ml-[6px] mt-[3px] w-[20px] h-[20px]"><use href="#plus"/></svg>
                                </div>
                                <div class="ml-[40px] mt-[22px] w-[748px] h-px bg-[#3a6ea5]"></div>
                            </div>
                            <div class="h-[50px]">
                                <div class="flex items-start">
                                    <svg class="ml-[7px] mt-[12px] w-[6px] h-[6px]"><use href="#tri"/></svg>
                                    <div class="ml-[7px] w-[714px] h-[25px] border-b border-b-[#3a6ea5] text-[14.7px] font-semibold text-[#444] leading-[24px]"><span class="underline">Medications</span></div>
                                    <svg class="ml-[4px] mt-[4px] w-[20px] h-[21px]"><use href="#quote"/></svg>
                                    <svg class="ml-[6px] mt-[3px] w-[20px] h-[20px]"><use href="#plus"/></svg>
                                </div>
                                <div class="ml-[40px] mt-[22px] w-[748px] h-px bg-[#3a6ea5]"></div>
                            </div>
                            <div class="h-[50px]">
                                <div class="flex items-start">
                                    <svg class="ml-[7px] mt-[12px] w-[6px] h-[6px]"><use href="#tri"/></svg>
                                    <div class="ml-[7px] w-[714px] h-[25px] border-b border-b-[#3a6ea5] text-[14.7px] font-semibold text-[#444] leading-[24px]"><span class="underline">Orders</span></div>
                                    <svg class="ml-[4px] mt-[4px] w-[20px] h-[21px]"><use href="#quote"/></svg>
                                    <svg class="ml-[6px] mt-[3px] w-[20px] h-[20px]"><use href="#plus"/></svg>
                                </div>
                                <div class="ml-[40px] mt-[22px] w-[748px] h-px bg-[#3a6ea5]"></div>
                            </div>
                            <div class="h-[38px] overflow-hidden">
                                <div class="flex items-start">
                                    <svg class="ml-[7px] mt-[12px] w-[6px] h-[6px]"><use href="#tri"/></svg>
                                    <div class="ml-[7px] w-[714px] h-[25px] border-b border-b-[#3a6ea5] text-[14.7px] font-semibold text-[#444] leading-[24px]"><span class="underline">Past History</span></div>
                                    <svg class="ml-[4px] mt-[4px] w-[20px] h-[21px]"><use href="#quote"/></svg>
                                    <svg class="ml-[6px] mt-[3px] w-[20px] h-[20px]"><use href="#plus"/></svg>
                                </div>
                            </div>
                        </div>
                        <div class="flex-1 flex flex-col pr-px">
                            <div class="h-[15px] border border-[#ccc] flex items-center justify-center"><svg class="w-[8px] h-[6px]"><use href="#up"/></svg></div>
                            <div class="h-[261px] border border-[#ccc]"></div>
                            <div class="mt-auto h-[15px] border border-[#ccc] flex items-center justify-center mb-[2px]"><svg class="w-[8px] h-[6px]"><use href="#down"/></svg></div>
                        </div>
                    </div>
                </section>

                <section class="mt-[5px] h-[284px] border border-[#ccc]">
                    <div class="h-[33px] pl-[7px] pr-[10px] flex items-center justify-between">
                        <span class="text-[15px] text-[#9a9a9a] mt-[3px]">Assessment / Plan</span>
                        <span class="flex items-center gap-[15px]"><svg class="w-[8px] h-[10px]"><use href="#pin"/></svg><svg class="w-[10px] h-[10px]"><use href="#close"/></svg></span>
                    </div>
                    <div class="h-[30px] pl-[2px] pr-[4px] flex items-center border-b border-b-[#3a6ea5] text-[12.5px] text-[#444]">
                        <span class="mt-[4px]">Assessment</span>
                        <span class="ml-auto mb-[2px]">Note</span>
                        <span class="ml-[4px] w-[34px] h-[24px] border border-[#ccc] flex items-center gap-[4px] mb-[2px]"><svg class="w-[16px] h-[18px]"><use href="#note"/></svg><svg class="w-[8px] h-[6px]"><use href="#down"/></svg></span>
                        <svg class="ml-[13px] mb-[2px] w-[20px] h-[20px]"><use href="#reset"/></svg>
                    </div>
                    <div class="mt-[9px] ml-[2px] w-[815px] h-[83px] border border-[#aaa] px-[4px] font-['Liberation_Sans',sans-serif] text-[12.5px] text-black leading-[15px]">Male patient of 30 year(s) old. Items found were:&nbsp; Crustacean</div>
                    <div class="h-[33px] pl-[2px] pr-[4px] flex items-center border-b border-b-[#3a6ea5] text-[12.5px] text-[#444]">
                        <span class="mt-[8px]">Plan</span>
                        <span class="ml-auto mt-[3px]">Note</span>
                        <span class="ml-[5px] w-[33px] h-[24px] border border-[#ccc] flex items-center gap-[4px] mt-px"><svg class="w-[16px] h-[18px]"><use href="#note"/></svg><svg class="w-[8px] h-[6px]"><use href="#down"/></svg></span>
                        <svg class="ml-[8px] mt-px w-[20px] h-[20px]"><use href="#reset"/></svg>
                    </div>
                    <div class="mt-[9px] ml-[2px] w-[815px] h-[83px] border border-[#aaa] pl-[15px] font-['Liberation_Sans',sans-serif] text-[12.5px] text-black leading-[15px]">Patient instructed to return as necessary.</div>
                </section>
            </div>

            <!-- Right rail -->
            <nav class="flex-1 pt-[11px] pr-[6px] flex flex-col items-center gap-[13px] text-[13px] text-[#444] [&>span]:[writing-mode:vertical-rl]">
                <span>Smart Box</span>
                <span>Clinical Alerts</span>
                <span>Tele Medicine</span>
            </nav>
        </main>

        <!-- Context menu over the pending orders -->
        <div class="absolute left-[395px] top-[343px] w-[279px] h-[142px] bg-white border border-[#ccc] shadow-[2px_2px_4px_rgba(0,0,0,0.25)] pt-[3px] pl-[31px] text-[15px] text-[#444]">
            <div class="h-[27.5px] leading-[27px]">Add Result</div>
            <div class="h-[27.5px] leading-[27px]">Add Order</div>
            <div class="h-[27.5px] leading-[27px]">Open Full Page</div>
            <div class="h-[27.5px] leading-[27px] relative">More Information<svg class="absolute right-[5px] top-[9px] w-[4px] h-[7px]" viewBox="0 0 4 7"><path d="M0 0l4 3.500L0 7z" fill="#444"/></svg></div>
            <div class="h-[27.5px] leading-[27px]">Inactivate Selected Orders</div>
        </div>
        <div class="absolute left-[397px] top-[397px] w-[275px] h-[35px] border-[3px] border-[#ea5a4f] shadow-[0_0_4px_rgba(0,0,0,0.5),inset_0_0_3px_rgba(0,0,0,0.45)]"></div>
        <svg class="absolute left-[298px] top-[393px] w-[96px] h-[36px] drop-shadow-[0_2px_2px_rgba(0,0,0,0.4)]" viewBox="0 0 96 36"><path d="M6.500 13H70L62 3l30 14-30 14 8-7H6.500a5.500 5.500 0 0 1 0-11z" fill="#f4584e"/></svg>
    </div>
</body>
</html>
